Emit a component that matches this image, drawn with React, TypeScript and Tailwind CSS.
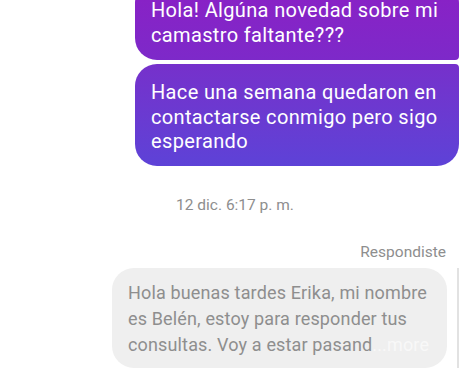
import React from "react";

export default function App() {
  return (
    <div
      className="w-[470px] h-[370px] overflow-hidden bg-white relative"
      style={{ fontFamily: "Roboto, 'Noto Sans', sans-serif" }}
    >
      <div className="flex flex-col -mt-[19px]">
        <div className="flex flex-col items-end pr-[11px] gap-[4px]">
          <div className="w-[324px] rounded-l-[22px] rounded-tr-[22px] rounded-br-[4px] bg-gradient-to-b from-[#8b1fc5] to-[#7d29c9] px-4 pt-[17px] pb-[13px] text-white text-[20px] leading-[24.5px] tracking-[0.35px]">
            <div className="whitespace-nowrap">Hola! Algúna novedad sobre mi</div>
            <div className="whitespace-nowrap">camastro faltante???</div>
          </div>
          <div className="w-[324px] rounded-l-[22px] rounded-br-[22px] rounded-tr-[4px] bg-gradient-to-b from-[#7630cb] to-[#5d42d7] px-4 pt-4 pb-[12px] text-white text-[20px] leading-[24.5px] tracking-[0.35px]">
            <div className="whitespace-nowrap">Hace una semana quedaron en</div>
            <div className="whitespace-nowrap">contactarse conmigo pero sigo</div>
            <div className="whitespace-nowrap">esperando</div>
          </div>
        </div>
        <div className="mt-[29px] text-center text-[15.5px] leading-[20px] text-[#8e8e8e]">
          12 dic. 6:17 p. m.
        </div>
        <div className="mt-[27px] pr-[24px] text-right text-[15.5px] leading-[20px] text-[#8e8e8e]">
          Respondiste
        </div>
        <div className="mt-[6px] flex justify-end items-stretch pr-[11px] gap-[10px]">
          <div className="w-[335px] rounded-[22px] bg-[#efefef] px-4 pt-[12px] pb-[10px] text-[18px] leading-[26px] tracking-[0.15px] text-[#8e8e8e]">
            <div className="whitespace-nowrap">Hola buenas tardes Erika, mi nombre</div>
            <div className="whitespace-nowrap">es Belén, estoy para responder tus</div>
            <div className="whitespace-nowrap">
              consultas. Voy a estar pasand<span className="text-[#f8f8f8]">...more</span>
            </div>
          </div>
          <div className="w-[2px] bg-[#e2e2e2]" />
        </div>
      </div>
    </div>
  );
}
